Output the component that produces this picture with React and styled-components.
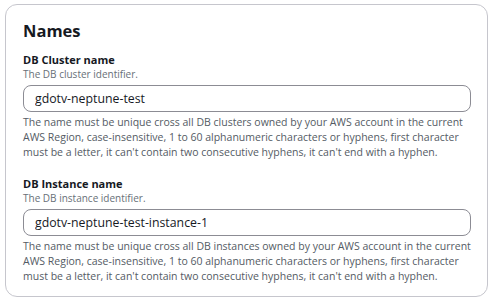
import React from "react";
import styled, { createGlobalStyle } from "styled-components";

const GlobalStyle = createGlobalStyle`
  html, body {
    margin: 0;
    padding: 0;
    background: #ffffff;
  }
  body {
    font-family: "Open Sans", "Noto Sans", sans-serif;
    color: #16191f;
  }
`;

const fields = [
  {
    label: "DB Cluster name",
    description: "The DB cluster identifier.",
    value: "gdotv-neptune-test",
    help: [
      "The name must be unique cross all DB clusters owned by your AWS account in the current",
      "AWS Region, case-insensitive, 1 to 60 alphanumeric characters or hyphens, first character",
      "must be a letter, it can't contain two consecutive hyphens, it can't end with a hyphen.",
    ],
  },
  {
    label: "DB Instance name",
    description: "The DB instance identifier.",
    value: "gdotv-neptune-test-instance-1",
    help: [
      "The name must be unique cross all DB instances owned by your AWS account in the current",
      "AWS Region, case-insensitive, 1 to 60 alphanumeric characters or hyphens, first character",
      "must be a letter, it can't contain two consecutive hyphens, it can't end with a hyphen.",
    ],
  },
];

const App = () => {
  return (
    <Page>
      <GlobalStyle />
      <Card>
        <Heading>Names</Heading>
        <Fields>
          {fields.map((f) => (
            <Field key={f.label}>
              <Label>{f.label}</Label>
              <Description>{f.description}</Description>
              <Input readOnly value={f.value} />
              <Help>
                {f.help.map((line) => (
                  <span key={line}>{line}</span>
                ))}
              </Help>
            </Field>
          ))}
        </Fields>
      </Card>
    </Page>
  );
};

const Page = styled.div`
  width: 494px;
  height: 304px;
  padding: 4px 6px 7px 5px;
  box-sizing: border-box;
`;

const Card = styled.div`
  height: 100%;
  box-sizing: border-box;
  border: 1px solid #c6c6cd;
  border-radius: 12px;
  padding: 15px 17px 0 17px;
`;

const Heading = styled.h2`
  margin: 0;
  font-size: 16.5px;
  line-height: 22px;
  font-weight: 700;
  color: #16191f;
`;

const Fields = styled.div`
  display: flex;
  flex-direction: column;
  gap: 17px;
  margin-top: 11px;
`;

const Field = styled.div`
  display: flex;
  flex-direction: column;
`;

const Label = styled.div`
  font-size: 11px;
  line-height: 14px;
  font-weight: 700;
  color: #16191f;
`;

const Description = styled.div`
  font-size: 10px;
  line-height: 14px;
  color: #687078;
`;

const Input = styled.input`
  margin-top: 4px;
  height: 27px;
  box-sizing: border-box;
  width: 448px;
  border: 1px solid #8c8c94;
  border-radius: 8px;
  padding: 0 11px;
  font-family: "Open Sans", "Noto Sans", sans-serif;
  font-size: 12.3px;
  color: #16191f;
  outline: none;
`;

const Help = styled.div`
  margin-top: 3px;
  display: flex;
  flex-direction: column;
  font-size: 10.5px;
  line-height: 15px;
  color: #545b64;
  white-space: nowrap;
`;

export default App;
